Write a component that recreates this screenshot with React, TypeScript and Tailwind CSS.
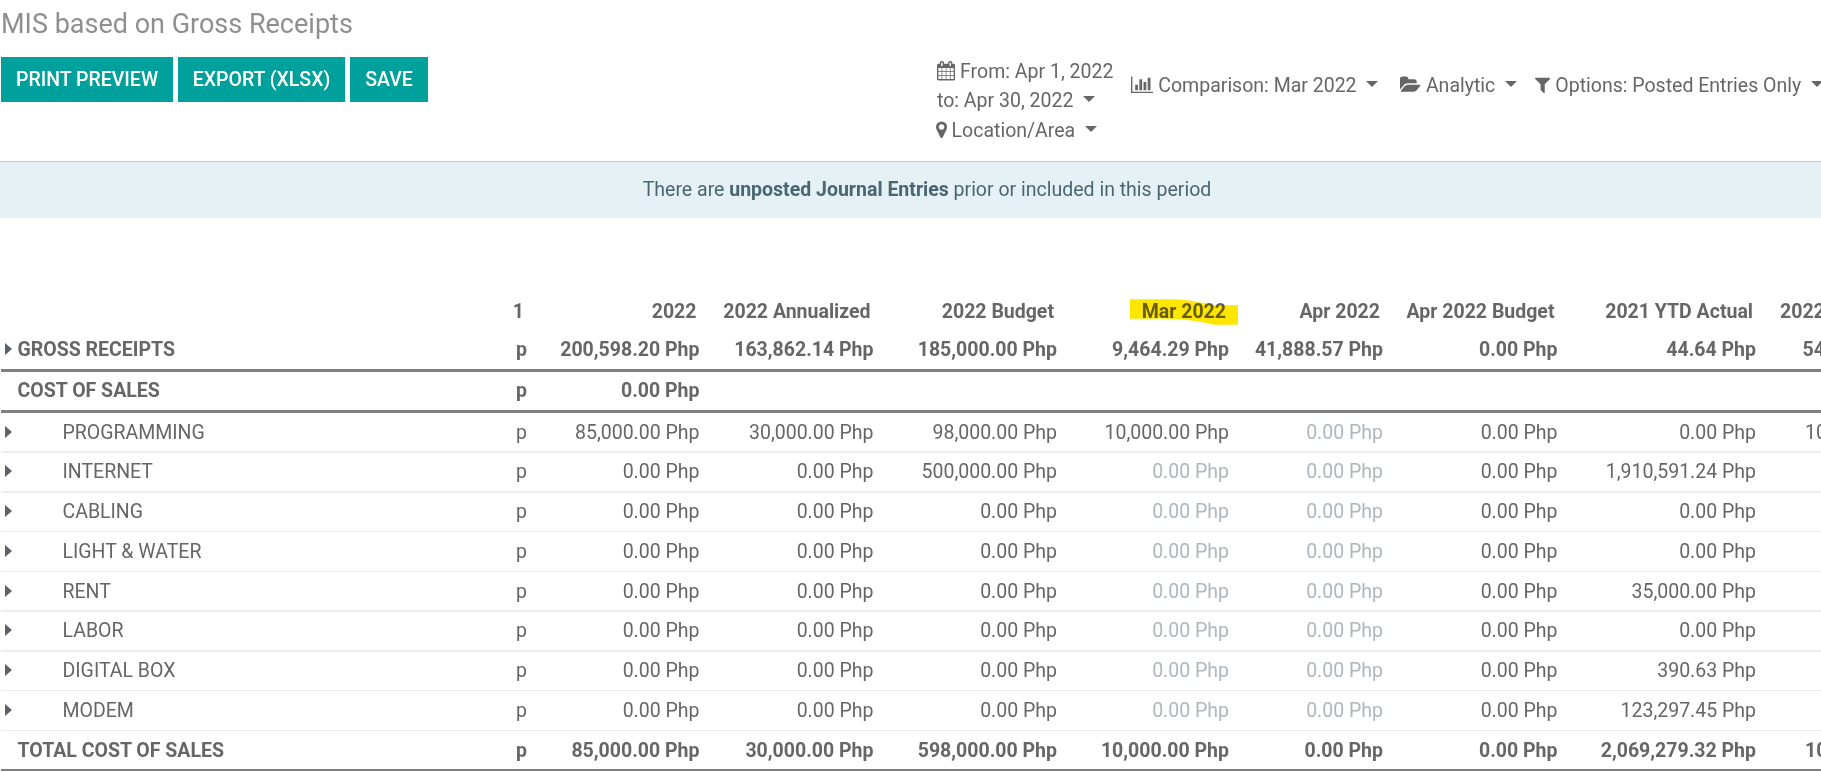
import type { ReactNode } from "react";

const ICONS = {
  calendar: {
    box: "64 0 1664 1792",
    size: "w-[18.1px]",
    d: "M192 1664h288v-288h-288v288zm352 0h320v-288h-320v288zm-352-352h288v-320h-288v320zm352 0h320v-320h-320v320zm-352-384h288v-288h-288v288zm736 736h320v-288h-320v288zm-384-736h320v-288h-320v288zm768 736h288v-288h-288v288zm-384-352h320v-320h-320v320zm-352-864v-288q0-13-9.5-22.5t-22.5-9.5h-64q-13 0-22.5 9.5t-9.5 22.5v288q0 13 9.5 22.5t22.5 9.5h64q13 0 22.5-9.5t9.5-22.5zm736 864h288v-320h-288v320zm-384-384h320v-288h-320v288zm384 0h288v-288h-288v288zm32-480v-288q0-13-9.5-22.5t-22.5-9.5h-64q-13 0-22.5 9.5t-9.5 22.5v288q0 13 9.5 22.5t22.5 9.5h64q13 0 22.5-9.5t9.5-22.5zm384-64v1280q0 52-38 90t-90 38h-1408q-52 0-90-38t-38-90v-1280q0-52 38-90t90-38h128v-96q0-66 47-113t113-47h64q66 0 113 47t47 113v96h384v-96q0-66 47-113t113-47h64q66 0 113 47t47 113v96h128q52 0 90 38t38 90z",
  },
  marker: {
    box: "384 0 1024 1792",
    size: "w-[11.1px]",
    d: "M1152 640q0-106-75-181t-181-75-181 75-75 181 75 181 181 75 181-75 75-181zm256 0q0 109-33 179l-364 774q-16 33-47.5 52t-67.5 19-67.5-19-46.5-52l-365-774q-33-70-33-179 0-212 150-362t362-150 362 150 150 362z",
  },
  chart: {
    box: "0 0 2048 1792",
    size: "w-[22.3px]",
    d: "M640 896v512h-256v-512h256zm384-512v1024h-256v-1024h256zm1024 1152v128h-2048v-1536h128v1408h1920zm-640-896v768h-256v-768h256zm384-384v1152h-256v-1152h256z",
  },
  folder: {
    box: "0 0 1920 1792",
    size: "w-[20.9px]",
    d: "M1879 952q0 31-31 66l-336 396q-43 51-120.5 86.5t-143.5 35.5h-1088q-34 0-60.5-13t-26.5-43q0-31 31-66l336-396q43-51 120.5-86.5t143.5-35.5h1088q34 0 60.5 13t26.5 43zm-343-344v160h-832q-94 0-197 47.5t-164 119.5l-337 396-5 6q0-4-.5-12.5t-.5-12.5v-960q0-92 66-158t158-66h320q92 0 158 66t66 158v32h544q92 0 158 66t66 158z",
  },
  filter: {
    box: "192 0 1408 1792",
    size: "w-[15.3px]",
    d: "M1595 295q17 41-14 70l-493 493v742q0 42-39 59-13 5-25 5-27 0-45-19l-256-256q-19-19-19-45v-486l-493-493q-31-29-14-70 17-39 59-39h1280q42 0 59 39z",
  },
};

function Icon({ name }: { name: keyof typeof ICONS }) {
  const icon = ICONS[name];
  return (
    <svg viewBox={icon.box} className={`mr-[5px] inline-block h-[19.5px] align-[-2.8px] ${icon.size}`} fill="currentColor">
      <path d={icon.d} />
    </svg>
  );
}

function Caret() {
  return (
    <svg viewBox="0 0 12 6" className="ml-[9.5px] inline-block h-[6px] w-[12px] align-[5.5px]" fill="currentColor">
      <path d="M0 0h12L6 6z" />
    </svg>
  );
}

function Button({ children, width }: { children: ReactNode; width: string }) {
  return (
    <button className={`h-[45px] bg-[#00a09d] text-center leading-[45px] font-medium text-white ${width}`}>{children}</button>
  );
}

type Row = {
  label: string;
  kind: "bold" | "item";
  arrow?: boolean;
  box: string;
  cells: string[];
  cut?: string;
  cutPad?: string;
};

const Z = "0.00 Php";
const M = "~0.00 Php";
const heavy = "border-b-[3px] border-[#808080]";
const thin = "border-b border-[#ececec]";
const thick = "border-b-2 border-[#ededed]";

const ROWS: Row[] = [
  { label: "GROSS RECEIPTS", kind: "bold", arrow: true, box: `h-[42px] pt-[8px] ${heavy}`, cells: ["200,598.20 Php", "163,862.14 Php", "185,000.00 Php", "9,464.29 Php", "41,888.57 Php", Z, "44.64 Php"], cut: "54", cutPad: "pl-[46.5px]" },
  { label: "COST OF SALES", kind: "bold", box: `h-[41px] pt-[7px] ${heavy}`, cells: [Z, "", "", "", "", "", ""] },
  { label: "PROGRAMMING", kind: "item", arrow: true, box: `h-[40px] pt-[8px] ${thick}`, cells: ["85,000.00 Php", "30,000.00 Php", "98,000.00 Php", "10,000.00 Php", M, Z, Z], cut: "10", cutPad: "pl-[49px]" },
  { label: "INTERNET", kind: "item", arrow: true, box: `h-[40px] pt-[7px] ${thick}`, cells: [Z, Z, "500,000.00 Php", M, M, Z, "1,910,591.24 Php"] },
  { label: "CABLING", kind: "item", arrow: true, box: `h-[39px] pt-[7px] ${thin}`, cells: [Z, Z, Z, M, M, Z, Z] },
  { label: "LIGHT & WATER", kind: "item", arrow: true, box: `h-[40px] pt-[8px] ${thin}`, cells: [Z, Z, Z, M, M, Z, Z] },
  { label: "RENT", kind: "item", arrow: true, box: `h-[40px] pt-[8px] ${thick}`, cells: [Z, Z, Z, M, M, Z, "35,000.00 Php"] },
  { label: "LABOR", kind: "item", arrow: true, box: `h-[40px] pt-[7px] ${thick}`, cells: [Z, Z, Z, M, M, Z, Z] },
  { label: "DIGITAL BOX", kind: "item", arrow: true, box: `h-[39px] pt-[7px] ${thin}`, cells: [Z, Z, Z, M, M, Z, "390.63 Php"] },
  { label: "MODEM", kind: "item", arrow: true, box: `h-[40px] pt-[8px] ${thin}`, cells: [Z, Z, Z, M, M, Z, "123,297.45 Php"] },
  { label: "TOTAL COST OF SALES", kind: "bold", box: "h-[40px] pt-[8px] border-b-2 border-[#808080]", cells: ["85,000.00 Php", "30,000.00 Php", "598,000.00 Php", "10,000.00 Php", Z, Z, "2,069,279.32 Php"], cut: "10", cutPad: "pl-[49px]" },
];

const HEADERS = ["2022", "2022 Annualized", "2022 Budget", "Mar 2022", "Apr 2022", "Apr 2022 Budget", "2021 YTD Actual"];

const GRID =
  "ml-px grid w-[1820px] grid-cols-[526px_172.5px_174px_183.5px_172px_154px_174.5px_198.5px_65px] whitespace-nowrap leading-[23px]";

function Highlight() {
  return (
    <svg viewBox="0 0 108 26" className="absolute -top-[1px] -right-[9px] h-[26px] w-[108px] mix-blend-multiply" fill="#ffe600">
      <path d="M0 .3H43C62 1 72 4 84 6.3H108V25.7H84C70 23 58 19.8 36 19.8H0z" />
    </svg>
  );
}

export default function App() {
  return (
    <div className="h-[772px] w-full overflow-hidden bg-white font-['Roboto',sans-serif] text-[19.5px] text-[#666666]">
      <header className="flex h-[162px] flex-col border-b border-[#c3cad0]">
        <h1 className="h-[57px] pt-[4px] pl-px text-[27px] leading-[40px] text-[#8f8f8f]">MIS based on Gross Receipts</h1>
        <div className="flex whitespace-nowrap">
          <div className="flex w-[936px] shrink-0 gap-[5px] pl-px">
            <Button width="w-[172px]">PRINT PREVIEW</Button>
            <Button width="w-[167px]">EXPORT (XLSX)</Button>
            <Button width="w-[78px]">SAVE</Button>
          </div>
          <div className="w-[885px] shrink-0 leading-[29px]">
            <div className="flex h-[59px]">
              <div className="w-[195px] shrink-0 pl-px">
                <Icon name="calendar" />
                From: Apr 1, 2022
                <br />
                to: Apr 30, 2022
                <Caret />
              </div>
              <div className="w-[269px] shrink-0 pt-[14px]">
                <Icon name="chart" />
                Comparison: Mar 2022
                <Caret />
              </div>
              <div className="w-[135px] shrink-0 pt-[14px]">
                <Icon name="folder" />
                Analytic
                <Caret />
              </div>
              <div className="pt-[14px]">
                <Icon name="filter" />
                Options: Posted Entries Only
                <Caret />
              </div>
            </div>
            <div className="-ml-[0.5px]">
              <Icon name="marker" />
              Location/Area
              <Caret />
            </div>
          </div>
        </div>
      </header>

      <div className="h-[56px] bg-[#e6f1f6] pt-[12.5px] pl-[33px] text-center leading-[30px] text-[#4a6670]">
        There are <b>unposted Journal Entries</b> prior or included in this period
      </div>

      <main className="pt-[75px]">
        <div className={`${GRID} h-[37px] pt-[7px] font-bold`}>
          <span className="pr-[3px] text-right">1</span>
          {HEADERS.map((h, i) => (
            <span key={h} className="relative pr-[3px] text-right">
              {h}
              {i === 3 && <Highlight />}
            </span>
          ))}
          <span className="overflow-hidden pl-[24px]">2022</span>
        </div>
        {ROWS.map((r) => (
          <div key={r.label} className={`${GRID} ${r.box} ${r.kind === "bold" ? "font-bold" : ""}`}>
            <span className="flex">
              <span className="w-[16.5px] shrink-0 pt-[5px] pl-[4px]">
                {r.arrow && (
                  <svg viewBox="0 0 7 12" className="h-[12px] w-[7px]" fill="#5c6268">
                    <path d="M0 0L7 6L0 12z" />
                  </svg>
                )}
              </span>
              <span className={r.kind === "item" ? "grow pl-[45px]" : "grow"}>{r.label}</span>
              <span>p</span>
            </span>
            {r.cells.map((c, i) => (
              <span key={i} className={c.startsWith("~") ? "text-right text-[#b0b6bb]" : "text-right"}>
                {c.replace("~", "")}
              </span>
            ))}
            <span className={`overflow-hidden ${r.cutPad ?? ""}`}>{r.cut}</span>
          </div>
        ))}
      </main>
    </div>
  );
}
